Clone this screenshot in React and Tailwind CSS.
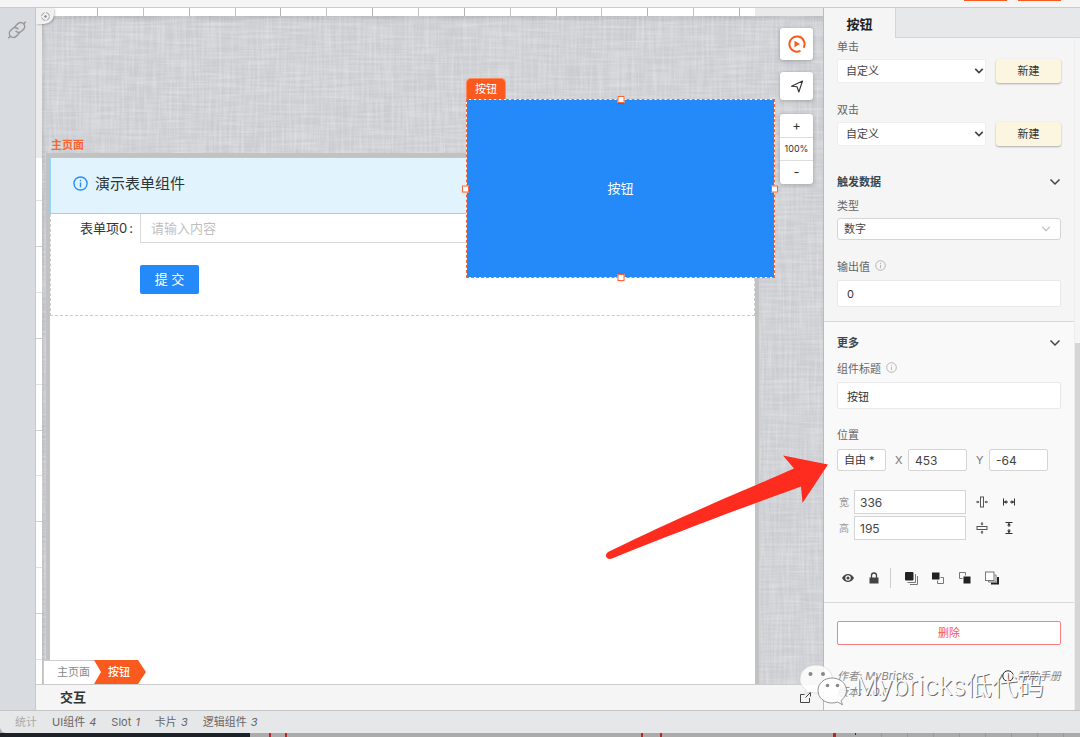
import React, { useId } from "react";

function Chevron({ className = "", width = 2 }) {
  return (
    <svg viewBox="0 0 12 12" fill="none" stroke="currentColor" strokeWidth={width} className={className} aria-hidden="true">
      <path d="M1.5 3.5 6 8l4.5-4.5" />
    </svg>
  );
}

function InfoIcon({ className = "", width = 1 }) {
  return (
    <svg viewBox="0 0 16 16" fill="none" stroke="currentColor" strokeWidth={width} className={className} aria-hidden="true">
      <circle cx="8" cy="8" r="7" />
      <path d="M8 7v5M8 4v1.6" />
    </svg>
  );
}

function Fabric() {
  return (
    <svg className="absolute inset-0 h-full w-full" aria-hidden="true">
      <defs>
        <filter id="weft" x="0" y="0" width="100%" height="100%" colorInterpolationFilters="sRGB">
          <feTurbulence type="fractalNoise" baseFrequency="0.025 0.4" numOctaves="2" seed="4" />
          <feColorMatrix values="0 0 0 0 1  0 0 0 0 1  0 0 0 0 1  0.5 0 0 0 -0.18" />
        </filter>
        <filter id="warp" x="0" y="0" width="100%" height="100%" colorInterpolationFilters="sRGB">
          <feTurbulence type="fractalNoise" baseFrequency="0.4 0.025" numOctaves="2" seed="9" />
          <feColorMatrix values="0 0 0 0 1  0 0 0 0 1  0 0 0 0 1  0.5 0 0 0 -0.18" />
        </filter>
      </defs>
      <rect width="100%" height="100%" filter="url(#weft)" />
      <rect width="100%" height="100%" filter="url(#warp)" />
    </svg>
  );
}

function TopRuler() {
  const ticks = Array.from({ length: 16 }, (_, i) => i);
  return (
    <svg className="h-2 w-full" aria-hidden="true">
      {ticks.map((i) => (
        <rect key={i} x={Math.round(15 + i * 45.85)} y="0" width="1" height="8" fill={i % 2 ? "#c4c4c4" : "#b4b4b4"} />
      ))}
    </svg>
  );
}

function SideRuler() {
  const ticks = Array.from({ length: 11 }, (_, i) => i);
  return (
    <svg className="h-full w-full" aria-hidden="true">
      {ticks.map((i) => (
        <rect key={i} x="0" y={Math.round(42 + i * 45.9)} width="7" height="1" fill={i % 2 ? "#cfcfcf" : "#e2e2e2"} />
      ))}
    </svg>
  );
}

function Handle({ className }) {
  return <span className={`absolute h-[7px] w-[7px] border border-[#fa6432] bg-white shadow-sm ${className}`} />;
}

function Workspace() {
  return (
    <div className="relative flex min-h-0 flex-1 flex-col">
      <div className="flex h-2 shrink-0 bg-[#eaeaea]">
        <div className="mr-[68px] flex-1 bg-white pl-[46px]">
          <TopRuler />
        </div>
      </div>
      <div className="flex min-h-0 flex-1">
        <div className="flex w-[6px] shrink-0 flex-col bg-white">
          <div className="h-[142px] shrink-0 bg-[#ebebeb]" />
          <div className="min-h-0 flex-1">
            <SideRuler />
          </div>
        </div>
        <div className="relative flex min-w-0 flex-1 flex-col overflow-hidden bg-[#cbccd1] pl-1 shadow-[inset_2px_3px_4px_rgba(0,0,0,0.12)]">
          <Fabric />
          <div className="relative mt-[121px] mr-16 flex min-h-0 flex-1 flex-col">
            <h1 className="h-4 pl-[5px] text-[11px] leading-4 font-bold text-[#fa6532]">主页面</h1>
            <div className="flex min-h-0 flex-1 flex-col border-4 border-b-0 border-[#c2c2c2] bg-white">
              <div className="flex h-[57px] shrink-0 items-center gap-[7px] border border-[#91d5ff] bg-[#e1f4fd] pb-1 pl-[22px]">
                <InfoIcon className="h-[15px] w-[15px] text-[#2b8cfb]" width={1.5} />
                <p className="text-[15px] leading-6 text-[#2c3437]">演示表单组件</p>
              </div>
              <form className="flex h-[102px] shrink-0 flex-col border border-t-0 border-dashed border-[#ccc]" onSubmit={(e) => e.preventDefault()}>
                <div className="flex">
                  <label htmlFor="item0" className="flex w-[89px] shrink-0 justify-end gap-[2px] pr-[7px] text-[13px] leading-[29px] text-[#333]">
                    <span>表单项0</span>
                    <span>:</span>
                  </label>
                  <input
                    id="item0"
                    placeholder="请输入内容"
                    className="h-[29px] min-w-0 flex-1 border border-t-0 border-[#d9d9d9] px-[10px] text-[13px] outline-none placeholder:text-[#bfbfbf]"
                  />
                </div>
                <button className="mt-[22px] ml-[89px] h-[29px] w-[59px] rounded-[2px] bg-[#248afa] text-[13px] leading-[29px] text-white">
                  提 交
                </button>
              </form>
            </div>
          </div>

          <div className="absolute top-[83px] left-[424px] h-[179px] w-[309px]">
            <span className="absolute bottom-full left-0 h-[21px] rounded-t-[5px] border border-b-0 border-[#ff8a5c] bg-[#fa5a1e] px-2 text-[11px] leading-5 text-white">按钮</span>
            <button className="h-full w-full bg-[#248afa] text-[13px] text-white">按钮</button>
            <span className="pointer-events-none absolute inset-0 border border-white" />
            <span className="pointer-events-none absolute inset-0 border border-dashed border-[#fa6432]" />
            <Handle className="-top-[3px] left-1/2 -translate-x-1/2" />
            <Handle className="-bottom-[3px] left-1/2 -translate-x-1/2" />
            <Handle className="top-1/2 -left-1 -translate-y-1/2" />
            <Handle className="top-1/2 -right-[3px] -translate-y-1/2" />
          </div>

          <div className="absolute top-3 right-[10px] flex w-[33px] flex-col text-[#333]">
            <button aria-label="预览" className="flex h-8 items-center justify-center rounded-[3px] bg-white shadow-[0_1px_4px_rgba(0,0,0,0.25)]">
              <svg viewBox="0 0 18 18" className="h-[18px] w-[18px]" fill="none" stroke="#fa5a1e" strokeWidth="2">
                <path d="M12.500 15.800A7.600 7.600 0 1 1 15.600 12.800" />
                <path d="M6.500 5.700v6.600l5.500-3.300z" fill="#fa5a1e" stroke="none" />
              </svg>
            </button>
            <button aria-label="定位" className="mt-3 flex h-7 items-center justify-center rounded-[3px] bg-white shadow-[0_1px_4px_rgba(0,0,0,0.25)]">
              <svg viewBox="0 0 14 14" className="h-[14px] w-[14px]" fill="none" stroke="currentColor" strokeWidth="1.100" strokeLinejoin="round">
                <path d="M12.500 2 1.500 7.200 7 7.800 8.800 13z" />
              </svg>
            </button>
            <div className="mt-[14px] flex flex-col rounded-[3px] bg-white text-center shadow-[0_1px_4px_rgba(0,0,0,0.25)]">
              <button aria-label="放大" className="h-6 border-b border-[#ddd] text-[13px]">+</button>
              <span className="h-[23px] border-b border-[#ddd] text-[9px] leading-[22px]">100%</span>
              <button aria-label="缩小" className="h-[23px] text-[13px]">-</button>
            </div>
          </div>

          <nav className="absolute bottom-0 left-px flex h-6 text-[11px] leading-6">
            <a href="#page" className="w-[52px] border border-r-0 border-b-0 border-[#ccc] bg-white pl-[13px] leading-[22px] text-[#888]">主页面</a>
            <a href="#button" className="-ml-px w-[52px] bg-[#fa5a1e] pl-[14px] font-medium text-white [clip-path:polygon(0_0,44px_0,100%_50%,44px_100%,0_100%,7px_50%)]">按钮</a>
          </nav>
        </div>
      </div>

      <button aria-label="对齐" className="absolute top-0 left-0 flex h-4 w-[18px] items-center justify-center rounded-br-[10px] bg-[#f0f0f0] shadow-[1px_1px_2px_rgba(0,0,0,0.2)]">
        <svg viewBox="0 0 12 12" className="h-[11px] w-[11px]" fill="none" stroke="#999">
          <circle cx="6" cy="6" r="4.3" strokeDasharray="5.2 1.6" />
          <circle cx="6" cy="6" r="1.3" fill="#888" stroke="none" />
        </svg>
      </button>

      <svg viewBox="600 450 230 115" className="pointer-events-none absolute top-[442px] -right-[7px] z-10 h-[115px] w-[230px]" fill="#fe2c1e" aria-hidden="true">
        <path d="M828 464.500 783 455.500 794 468.500C750 488 690 512 608 552Q604.500 555 607 558Q609 559.500 612 558.500C690 527 750 505 801 486.500L802.500 503z" />
      </svg>
    </div>
  );
}

function Label({ children, info, className = "", htmlFor }) {
  return (
    <label htmlFor={htmlFor} className={`flex h-4 items-center gap-[5px] text-[11px] leading-4 text-[#666] ${className}`}>
      {children}
      {info && <InfoIcon className="mb-1 h-[11px] w-[11px] text-[#aaa]" width={1.2} />}
    </label>
  );
}

function EventRow({ label, className = "" }) {
  const id = useId();
  return (
    <div className={className}>
      <Label htmlFor={id}>{label}</Label>
      <div className="mt-1 flex gap-[10px]">
        <div className="relative flex-1">
          <select id={id} className="block h-6 w-full appearance-none rounded-[2px] border border-[#eee] bg-white px-2 text-[11px] text-[#444]">
            <option>自定义</option>
          </select>
          <Chevron className="pointer-events-none absolute top-[7px] right-[2px] h-[10px] w-[10px] text-[#444]" width={2} />
        </div>
        <button className="block h-6 w-[65px] rounded-[3px] bg-[#fcf5df] text-[11px] text-[#333] shadow-[0_1px_2px_rgba(0,0,0,0.3)]">新建</button>
      </div>
    </div>
  );
}

function GroupTitle({ children, className = "" }) {
  return (
    <button className={`flex h-4 w-full items-center justify-between text-[11px] leading-4 font-bold text-[#3a474d] ${className}`}>
      {children}
      <Chevron className="h-3 w-3 text-[#444]" width={1.5} />
    </button>
  );
}

const sizeIcon = "h-[14px] w-[14px] text-[#555]";

function SizeRow({ label, value, fit, fill, fitIcon, fillIcon, className = "" }) {
  const id = useId();
  return (
    <div className={`flex items-center ${className}`}>
      <label htmlFor={id} className="w-[17px] pl-[2px] text-[10px] text-[#999]">{label}</label>
      <input id={id} defaultValue={value} className="h-6 w-[112px] border border-[#d5d5d5] bg-white px-[5px] text-[12px] text-[#444]" />
      <button aria-label={fit} className="ml-[9px]">
        <svg viewBox="0 0 14 14" className={sizeIcon} fill="none" stroke="currentColor">{fitIcon}</svg>
      </button>
      <button aria-label={fill} className="ml-[13px]">
        <svg viewBox="0 0 14 14" className={sizeIcon} fill="none" stroke="#333">{fillIcon}</svg>
      </button>
    </div>
  );
}

function LayerIcon({ children }) {
  return (
    <svg viewBox="0 0 14 14" className="h-[14px] w-[14px]" fill="none" stroke="#777" aria-hidden="true">
      {children}
    </svg>
  );
}

const fitGlyph = (
  <>
    <rect x="5.500" y="2" width="3" height="10" />
    <path d="M1 7h3M10 7h3" />
    <path d="M2.500 5.500 4.500 7l-2 1.500zM11.500 5.500 9.500 7l2 1.500z" fill="#555" stroke="none" />
  </>
);
const fillGlyph = (
  <>
    <path d="M1.500 3.500v7M12.500 3.500v7" />
    <path d="M2 7h4M8 7h4" />
    <path d="M2 7l2.500-2v4zM12 7 9.500 5v4z" fill="#333" stroke="none" />
  </>
);

function Panel() {
  return (
    <aside className="relative flex w-[257px] shrink-0 flex-col border-l border-[#bbb] bg-[#f5f5f5]">
      <div className="flex h-[30px] shrink-0">
        <h2 className="w-[71px] pt-[6px] text-center text-[13px] leading-5 font-bold text-[#222]">按钮</h2>
        <div className="flex-1 border-b border-l border-[#d5d5d5] bg-[#e7e8ea]" />
      </div>
      <div className="flex min-h-0 flex-1">
        <div className="min-w-0 flex-1 overflow-hidden bg-[#f9f9f9]">
          <section className="border-b border-[#d8d8d8] bg-[#f5f5f5] pt-px pr-[13px] pb-[14px] pl-[13px]">
            <EventRow label="单击" />
            <EventRow label="双击" className="mt-[19px]" />
            <GroupTitle className="mt-7">触发数据</GroupTitle>
            <Label htmlFor="kind" className="mt-2">类型</Label>
            <div className="relative mt-1">
              <select id="kind" className="block h-[22px] w-full appearance-none rounded-[3px] border border-[#d5d5d5] bg-white px-[6px] text-[11px] text-[#444]">
                <option>数字</option>
              </select>
              <Chevron className="pointer-events-none absolute top-[6px] right-[10px] h-[10px] w-[10px] text-[#bbb]" width={1.3} />
            </div>
            <Label htmlFor="output" info className="mt-[19px]">输出值</Label>
            <input id="output" defaultValue="0" className="mt-[5px] block h-[27px] w-full rounded-[2px] border border-[#e8e8e8] bg-white px-[9px] text-[11px] text-[#333]" />
          </section>

          <section className="border-b border-[#d8d8d8] pt-[13px] pr-[13px] pb-[14px] pl-[13px]">
            <GroupTitle>更多</GroupTitle>
            <Label htmlFor="title" info className="mt-[10px]">组件标题</Label>
            <input id="title" defaultValue="按钮" className="mt-[5px] block h-[27px] w-full rounded-[2px] border border-[#e8e8e8] bg-white px-[9px] text-[11px] text-[#333]" />
            <Label htmlFor="pos" className="mt-[18px]">位置</Label>
            <div className="mt-[6px] flex h-[22px] items-center text-[11px] text-[#777]">
              <button id="pos" className="h-[22px] w-[49px] rounded-[2px] border border-[#d5d5d5] bg-white pl-[6px] text-left text-[#333]">自由 *</button>
              <label htmlFor="posx" className="w-[22px] pl-[9px]">X</label>
              <input id="posx" defaultValue="453" className="h-[22px] w-[59px] rounded-[2px] border border-[#d5d5d5] bg-white px-[6px] text-[12px] text-[#444]" />
              <label htmlFor="posy" className="w-[22px] pl-[9px]">Y</label>
              <input id="posy" defaultValue="-64" className="h-[22px] w-[59px] rounded-[2px] border border-[#d5d5d5] bg-white px-[6px] text-[12px] text-[#444]" />
            </div>
            <SizeRow label="宽" value="336" fit="宽度适应内容" fill="宽度铺满" fitIcon={fitGlyph} fillIcon={fillGlyph} className="mt-[19px]" />
            <SizeRow
              label="高"
              value="195"
              fit="高度适应内容"
              fill="高度铺满"
              fitIcon={<g transform="rotate(90 7 7)">{fitGlyph}</g>}
              fillIcon={<g transform="rotate(90 7 7)">{fillGlyph}</g>}
              className="mt-[2px]"
            />
            <div className="mt-7 flex h-5 items-center pl-1">
              <button aria-label="显示">
                <svg viewBox="0 0 14 14" className="h-[14px] w-[14px]" fill="#444">
                  <path fillRule="evenodd" d="M1 7C2.500 4.200 4.600 3 7 3s4.500 1.200 6 4c-1.500 2.800-3.600 4-6 4S2.500 9.800 1 7zM7 4.300a2.700 2.700 0 1 0 0 5.400 2.700 2.700 0 0 0 0-5.400z" />
                  <circle cx="7" cy="7" r="1.500" />
                </svg>
              </button>
              <button aria-label="锁定" className="ml-3">
                <svg viewBox="0 0 14 14" className="h-[14px] w-[14px]" fill="#444">
                  <path d="M2.500 6.500h9v6h-9z" />
                  <path d="M4.500 7V4.500a2.500 2.500 0 0 1 5 0V7" fill="none" stroke="#444" strokeWidth="1.300" />
                </svg>
              </button>
              <span className="ml-[9px] h-5 w-px bg-[#ccc]" />
              <button aria-label="置顶" className="ml-[13px]">
                <LayerIcon>
                  <path d="M6 13.500h7.500V5M3.500 11.500h8V3" />
                  <rect x="1" y="1" width="8.500" height="8.500" rx="1" fill="#222" stroke="none" />
                </LayerIcon>
              </button>
              <button aria-label="上移" className="ml-[13px]">
                <LayerIcon>
                  <path d="M9.500 6.500h3v6h-6v-3" />
                  <rect x="1" y="1.500" width="7.500" height="7" fill="#222" stroke="none" />
                </LayerIcon>
              </button>
              <button aria-label="下移" className="ml-[13px]">
                <LayerIcon>
                  <path d="M4.500 7.500h-3v-6h6v3" />
                  <rect x="5.500" y="5.500" width="7" height="7" fill="#222" stroke="none" />
                </LayerIcon>
              </button>
              <button aria-label="置底" className="ml-[13px]">
                <LayerIcon>
                  <path d="M6 12.500h7V6" stroke="#222" strokeWidth="2" />
                  <path d="M3.500 10v1H11V4H9.500" />
                  <rect x="0.500" y="1" width="8.500" height="8.500" fill="#fff" />
                </LayerIcon>
              </button>
            </div>
          </section>

          <section className="pt-[18px] pr-[13px] pl-[13px]">
            <button className="block h-6 w-full rounded-[2px] border border-[#f98080] bg-white text-[11px] text-[#fa5555]">删除</button>
            <div className="mt-[23px] flex items-start justify-between text-[11px] leading-4 text-[#888] italic">
              <p>
                作者: MyBricks
                <br />
                版本: 1.0.0
              </p>
              <a href="#manual" className="flex items-center gap-[3px]">
                <InfoIcon className="h-3 w-3 text-[#222]" width={1.300} />
                帮助手册
              </a>
            </div>
          </section>
        </div>
        <div className="flex w-[6px] shrink-0 flex-col border-l border-[#eee] bg-[#f5f5f5] pt-[305px]">
          <div className="flex-1 bg-[#d6d6d6]" />
        </div>
      </div>

      <div className="pointer-events-none absolute right-9 bottom-[2px] z-20 flex items-center gap-[6px] whitespace-nowrap">
        <svg viewBox="0 0 50 44" className="h-[44px] w-[50px]" aria-hidden="true">
          <path d="M17 1C8 1 1 7 1 15c0 5 2 8 6 11l-1.500 5 6-3c2 .7 4 1 6 1 9 0 16-6 16-14S26 1 17 1z" fill="#fff" fillOpacity="0.85" stroke="#ccc" strokeWidth="0.600" />
          <path d="M33 14c-8 0-14 5.500-14 12.500S25 39 33 39c2 0 4-.4 5.500-1l5 2.800-1.500-4.300c3.500-2.500 5.500-6 5.500-10C47.500 19.500 41 14 33 14z" fill="#fff" fillOpacity="0.850" stroke="#888" strokeWidth="0.900" />
          <g fill="#888">
            <circle cx="11.500" cy="10" r="2" />
            <circle cx="24" cy="10" r="2" />
            <circle cx="28.500" cy="21.500" r="1.800" />
            <circle cx="38.500" cy="21.500" r="1.800" />
          </g>
        </svg>
        <span className="text-[26px] leading-9 font-light text-[#fafafa] [text-shadow:1px_1px_0_rgba(70,70,70,0.8)]">Mybricks低代码</span>
      </div>
    </aside>
  );
}

const stats = [
  ["UI组件", 4],
  ["Slot", 1],
  ["卡片", 3],
  ["逻辑组件", 3],
];

export default function App() {
  return (
    <div className="flex h-screen flex-col overflow-hidden bg-[#ababab] font-['Inter','Noto_Sans_CJK_SC',sans-serif]">
      <header className="flex h-2 shrink-0 items-start justify-end gap-[11px] border-b border-[#ccc] bg-[#f5f5f5] pr-[19px]">
        <span className="h-px w-[43px] bg-[#fa5a1e]" />
        <span className="h-px w-[43px] bg-[#fa5a1e]" />
      </header>
      <div className="flex min-h-0 flex-1">
        <aside className="w-9 shrink-0 border-r border-[#c8c8c8] bg-[#d8dbe0] pt-3 pl-[7px]">
          <button aria-label="连接器">
            <svg viewBox="0 0 20 20" className="h-5 w-5" fill="none" stroke="#999" strokeWidth="1.500">
              <g transform="rotate(-43 10 10)">
                <path d="M-2 10h3M19 10h3" />
                <path d="M10.500 13Q9.500 14 8 14H5a4 4 0 0 1 0-8h2.500q4 0 4 4.500" />
                <path d="M9.500 7Q10.500 6 12 6h3a4 4 0 0 1 0 8h-2.500q-4 0-4-4.500" />
              </g>
            </svg>
          </button>
        </aside>
        <main className="flex min-w-0 flex-1 flex-col">
          <Workspace />
          <div className="flex h-[26px] shrink-0 items-center justify-between border-t border-[#ccc] bg-[#f5f5f5] pr-3 pl-6">
            <h2 className="text-[13px] font-bold text-[#333]">交互</h2>
            <button aria-label="展开">
              <svg viewBox="0 0 11 11" className="h-[11px] w-[11px]" fill="none" stroke="#444">
                <path d="M5 2.500H.5v8h9V6M6.500.5h4v4M10.500.5 5.500 5.500" />
              </svg>
            </button>
          </div>
        </main>
        <Panel />
      </div>
      <footer className="flex h-[23px] shrink-0 items-center gap-[15px] rounded-bl-md border-t border-[#c4c4c4] bg-[#e6e7e9] pl-[15px] text-[11px] text-[#666]">
        <span className="text-[#aaa]">统计</span>
        {stats.map(([name, count]) => (
          <span key={name}>
            {name} <i className="ml-px">{count}</i>
          </span>
        ))}
      </footer>
      <div className="flex h-1 shrink-0">
        <div className="w-[250px] bg-[#1c2127]" />
        <svg className="h-1 flex-1" aria-hidden="true">
          <g fill="#c5221f">
            <rect x="19" width="2" height="4" />
            <rect x="35" width="2" height="4" />
            <rect x="391" width="2" height="4" />
            <rect x="410" width="2" height="4" />
            <rect x="583" width="3" height="4" />
          </g>
          <rect x="605" width="1" height="2" fill="#333" />
          <path d="M631.500 0v4M657.500 0v4M683.500 0v4M709.500 0v4M735.500 0v4M761.500 0v4M787.500 0v4M813.500 0v4" stroke="#999" />
        </svg>
      </div>
    </div>
  );
}
